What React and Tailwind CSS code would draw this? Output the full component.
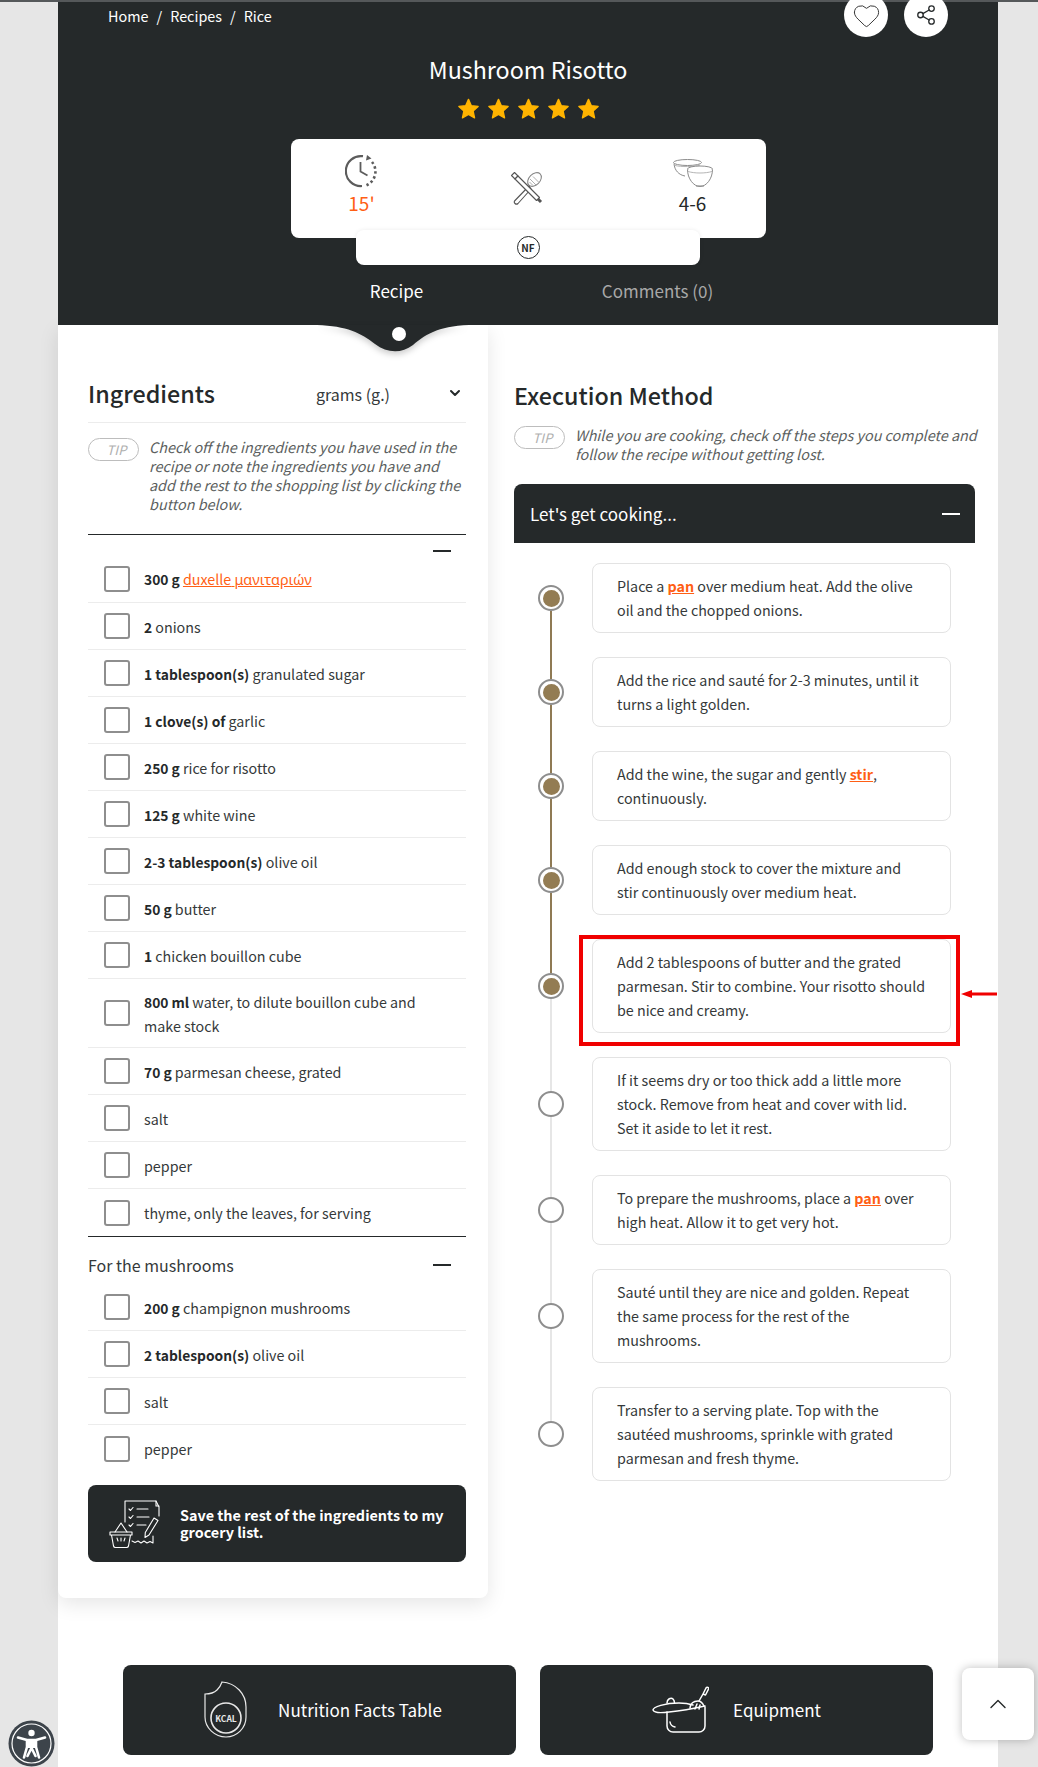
import React from 'react';
import { Heart, Share2, ChevronDown, ChevronUp } from 'lucide-react';

const ingredients = [
  { amount: '300 g', word: 'duxelle', greek: 'μανιταριών' },
  { amount: '2', text: 'onions' },
  { amount: '1 tablespoon(s)', text: 'granulated sugar' },
  { amount: '1 clove(s) of', text: 'garlic' },
  { amount: '250 g', text: 'rice for risotto' },
  { amount: '125 g', text: 'white wine' },
  { amount: '2-3 tablespoon(s)', text: 'olive oil' },
  { amount: '50 g', text: 'butter' },
  { amount: '1', text: 'chicken bouillon cube' },
  { amount: '800 ml', text: 'water, to dilute bouillon cube and make stock', tall: true },
  { amount: '70 g', text: 'parmesan cheese, grated' },
  { text: 'salt' },
  { text: 'pepper' },
  { text: 'thyme, only the leaves, for serving', last: true },
];

const mushrooms = [
  { amount: '200 g', text: 'champignon mushrooms' },
  { amount: '2 tablespoon(s)', text: 'olive oil' },
  { text: 'salt' },
  { text: 'pepper', last: true },
];

const Pan = () => <a className="font-bold text-[#ff5f15] underline">pan</a>;

const steps = [
  { body: <>Place a <Pan /> over medium heat. Add the olive oil and the chopped onions.</>, done: true },
  { body: 'Add the rice and sauté for 2-3 minutes, until it turns a light golden.', done: true },
  { body: <>Add the wine, the sugar and gently <a className="font-bold text-[#ff5f15] underline">stir</a>, continuously.</>, done: true },
  { body: <>Add enough stock to cover the mixture and<br />stir continuously over medium heat.</>, done: true },
  { body: 'Add 2 tablespoons of butter and the grated parmesan. Stir to combine. Your risotto should be nice and creamy.', done: true, marked: true },
  { body: 'If it seems dry or too thick add a little more stock. Remove from heat and cover with lid. Set it aside to let it rest.' },
  { body: <>To prepare the mushrooms, place a <Pan /> over high heat. Allow it to get very hot.</> },
  { body: 'Sauté until they are nice and golden. Repeat the same process for the rest of the mushrooms.' },
  { body: 'Transfer to a serving plate. Top with the sautéed mushrooms, sprinkle with grated parmesan and fresh thyme.' },
];

const StarIcon = () => (
  <svg width="23" height="22" viewBox="0 0 24 24" fill="#ffb400">
    <path d="M12 1.500l3.100 6.900 7.400.8-5.500 5 1.600 7.400L12 18l-6.600 3.600L7 14.200l-5.500-5 7.400-.8z" stroke="#ffb400" strokeWidth="1.500" strokeLinejoin="round" />
  </svg>
);

const ClockIcon = () => (
  <svg width="34" height="34" viewBox="0 0 34 34" fill="none" stroke="#5c5c5c" strokeWidth="2.200">
    <path d="M18 2.200A15 15 0 1 0 17 32" />
    <path d="M22 1l4.500 3.600L21 6.500z" fill="#5c5c5c" stroke="none" />
    <path d="M27 8a15 15 0 0 1-6 23.500" strokeWidth="2.600" strokeDasharray="2.400 2.600" />
    <path d="M15.500 8v9.500l7 4" strokeWidth="1.800" />
  </svg>
);

const ToolsIcon = () => (
  <svg width="34" height="34" viewBox="0 0 34 34" fill="none" stroke="#555" strokeWidth="1.100" strokeLinejoin="round">
    <ellipse cx="24.500" cy="8.500" rx="5.500" ry="8" transform="rotate(45 24.500 8.500)" stroke="#888" />
    <path d="M20 8l6 6M23 5.500l5.500 5.500M19.500 11l3.500 3.500" stroke="#999" strokeWidth="0.800" />
    <path d="M19 15L5 29.500a2 2 0 0 0 3 3L21 18z" fill="#fff" />
    <path d="M1.500 4.500l3-3 3.500 3.500-3 3z" fill="#fff" />
    <path d="M5 8l3-3 21.500 21.500-3 3z" fill="#fff" />
    <path d="M28 28l3 3" strokeWidth="3" />
  </svg>
);

const BowlsIcon = () => (
  <svg width="40" height="30" viewBox="0 0 40 30" fill="none" stroke="#8c8c8c" strokeWidth="1">
    <ellipse cx="14.500" cy="4.500" rx="14" ry="3" />
    <path d="M1 5.500c.5 7 5 11.500 11 12.500" />
    <path d="M2 7.500c6 1.500 19 1.500 25-.500" stroke="#b5b5b5" />
    <ellipse cx="27" cy="11" rx="12.500" ry="3" fill="#fff" />
    <path d="M14.500 11.500c0 9 6 17 12.500 17s12.500-8 12.500-17" fill="#fff" />
    <path d="M15 13.500c7 2 17 2 24 0" stroke="#b5b5b5" />
    <path d="M23 28h8" />
  </svg>
);

const NotchIcon = () => (
  <svg width="160" height="30" viewBox="0 0 160 30" className="drop-shadow-[0_3px_3px_rgba(0,0,0,0.2)]">
    <path d="M0 0C30 1 44 8 58 19 70 28 84 29 96 20 110 8 124 0 158 0z" fill="#25292a" />
  </svg>
);

const GroceryIcon = () => (
  <svg width="52" height="50" viewBox="0 0 52 50" fill="none" stroke="#fff" strokeWidth="1.100" strokeLinejoin="round" strokeLinecap="round" className="shrink-0">
    <path d="M17 23V2h31l3 6v9" />
    <path d="M48 2v5h3" />
    <path d="M21 10l1.500 1.500 2.500-3M21 18l1.500 1.500 2.500-3M21 26l1.500 1.500 2.500-3" />
    <path d="M29 10h11M29 18h12M29 26h9" />
    <path d="M46 19l4 2.500-9 14.500-4 2.500.300-5z" />
    <path d="M45 37v7l-3-1.500-3 1.500-3-2-3 2-3-2-3 1.500-3-1.500" />
    <path d="M2 33h22v3H2zM3.500 36l2 11a2 2 0 0 0 2 1.500h11a2 2 0 0 0 2-1.500l2-11" />
    <path d="M7 33l6-9 6 9M9 39l1 3M13 39v3M17 39l-1 3" />
  </svg>
);

const KcalIcon = () => (
  <svg width="44" height="58" viewBox="0 0 44 58" fill="none" stroke="#e8e8e8" strokeWidth="1.200" className="shrink-0">
    <path d="M18 1c14 1 24 12 24 25v10c0 11-9 20-20 20S1 47 1 36V13c5 0 9-1 12-4 2-2 4-5 5-8z" />
    <circle cx="22" cy="37" r="15" strokeWidth="1.600" />
    <text x="22" y="40.500" textAnchor="middle" fill="#e8e8e8" stroke="none" fontSize="8.500" fontWeight="700">KCAL</text>
  </svg>
);

const PotIcon = () => (
  <svg width="57" height="48" viewBox="0 0 57 48" fill="none" stroke="#fff" strokeWidth="1.500" strokeLinecap="round" strokeLinejoin="round" className="shrink-0">
    <path d="M15 26v14a6 6 0 0 0 6 6h26a6 6 0 0 0 6-6V21" />
    <path d="M18 36c.500 3 2 4.500 5 5" />
    <path d="M1 24c0-3 12-7 26-7 6 0 11 1 14 2M1 24c1 3 8 3 16 2 10-1 27-4 36-6" />
    <path d="M15 17c0-4 4-6 6-4 1.500 1.500 1.500 3 1.500 4" />
    <path d="M38 22c.500-4 3-7 8-7 3 0 5 3 6 5" />
    <path d="M47 15l4-7M51 8l3-6c1-1.500 3-.500 2.500 1l-3 6z" />
    <path d="M43 23l2-5M47 23l1-4" />
  </svg>
);

const AccessIcon = () => (
  <svg width="47" height="47" viewBox="0 0 47 47" fill="none">
    <circle cx="23.500" cy="23.500" r="23" fill="#3d444b" />
    <circle cx="23.500" cy="23.500" r="19.500" stroke="#fff" strokeWidth="1.200" />
    <circle cx="23.500" cy="13" r="3.200" fill="#fff" />
    <path d="M10 17.500l9 2.500v7l-3 10.500M37 17.500l-9 2.500v7l3 10.500M19 20h9M23.500 28l-4 8M23.500 28l4 8" stroke="#fff" strokeWidth="2.600" strokeLinecap="round" strokeLinejoin="round" />
    <path d="M19 20h9v8h-9z" fill="#fff" />
  </svg>
);

const TipPill = () => (
  <span className="flex h-[23px] w-[51px] shrink-0 items-center justify-center rounded-full border border-[#bdbdbd] pl-[6px] text-[13px] italic leading-none text-[#b0b0b0]">
    TIP
  </span>
);

const Minus = ({ color = 'bg-[#25292a]' }) => <span className={`block h-[2px] w-[18px] ${color}`}></span>;

const IngredientRow = ({ item }) => (
  <li className={`flex items-center pl-[16px] ${item.tall ? 'h-[69px]' : 'h-[47px]'} ${item.last ? '' : 'border-b border-[#ececec]'}`}>
    <span className="h-[26px] w-[26px] shrink-0 rounded-[3px] border-2 border-[#8e8e8e]"></span>
    <p className="ml-[14px] mt-[1px] max-w-[300px] text-[14.300px] leading-[24px] text-[#35393a]">
      {item.amount && <b className="text-[13.800px] font-semibold text-[#25292a]">{item.amount} </b>}
      {item.greek ? (
        <a className="text-[#ff5f15] underline">
          {item.word} <span className="font-['Noto_Sans'] text-[14.400px]">{item.greek}</span>
        </a>
      ) : item.text}
    </p>
  </li>
);

const Step = ({ step, index, total }) => {
  const topColor = index === 0 ? '' : index <= 4 ? 'bg-[#8f7a54]' : 'bg-[#e6e6e6]';
  const bottomColor = index === total - 1 ? '' : index < 4 ? 'bg-[#8f7a54]' : 'bg-[#e6e6e6]';
  return (
    <div className="flex">
      <div className="flex w-[26px] shrink-0 flex-col items-center">
        <span className={`w-[2px] flex-1 ${topColor}`}></span>
        <span className="flex h-[26px] w-[26px] shrink-0 items-center justify-center rounded-full border-[2.500px] border-[#8e8e8e] bg-white">
          {step.done && <span className="h-[17px] w-[17px] rounded-full bg-[#937c53]"></span>}
        </span>
        <span className={`w-[2px] flex-1 ${bottomColor}`}></span>
      </div>
      <div className="ml-[28px] w-[359px] py-[12px]">
        <div className="relative rounded-[8px] border border-[#e3e3e3] py-[10px] pl-[24px] pr-[23px] text-[14.300px] leading-[24px] text-[#35393a]">
          {step.body}
          {step.marked && (
            <>
              <span className="absolute -top-[5px] -left-[14px] -bottom-[14px] -right-[10px] border-4 border-[#f00000]"></span>
              <svg width="36" height="10" viewBox="0 0 36 10" className="absolute top-[49px] -right-[47px]">
                <path d="M0 5l11-4v2.500h25v3H11V9z" fill="#f00000" />
              </svg>
            </>
          )}
        </div>
      </div>
    </div>
  );
};

const App = () => {
  return (
    <div className="relative h-[1767px] w-[1038px] overflow-hidden bg-[#e6e6e6] font-['Noto_Sans_CJK_SC','Noto_Sans',sans-serif]">
      <div className="h-[2px] bg-[#55585a]"></div>
      <main className="ml-[58px] h-[1765px] w-[940px] bg-white">
        <header className="relative flex h-[323px] flex-col items-center bg-[#25292a] text-white">
          <div className="flex w-full items-start justify-between pl-[50px] pr-[50px]">
            <nav className="mt-[3px] flex gap-[8px] text-[14.400px] leading-[22px]">
              <span>Home</span><span>/</span><span>Recipes</span><span>/</span><span>Rice</span>
            </nav>
            <div className="-mt-[9px] flex gap-[16px]">
              <span className="flex h-[44px] w-[44px] items-center justify-center rounded-full bg-white">
                <Heart size={29} strokeWidth={0.8} color="#333" />
              </span>
              <span className="flex h-[44px] w-[44px] items-center justify-center rounded-full bg-white">
                <Share2 size={22} strokeWidth={1.4} color="#25292a" />
              </span>
            </div>
          </div>
          <h1 className="mt-[15px] text-[23.300px] leading-[34px]">Mushroom Risotto</h1>
          <div className="mt-[12px] flex gap-[7px]">
            {[0, 1, 2, 3, 4].map((i) => <StarIcon key={i} />)}
          </div>
          <div className="mt-[19px] flex h-[99px] w-[475px] items-start justify-between rounded-[8px] bg-white pl-[54px] pr-[53px] pt-[15px] text-[19px] leading-[26px] text-[#25292a]">
            <div className="flex w-[34px] flex-col items-center">
              <ClockIcon />
              <span className="mt-[2px] text-[#ff5f15]">15'</span>
            </div>
            <div className="ml-[3px] mt-[17px]"><ToolsIcon /></div>
            <div className="flex w-[40px] flex-col items-center">
              <span className="mt-[4px] block h-[30px]"><BowlsIcon /></span>
              <span className="mt-[2px]">4-6</span>
            </div>
          </div>
          <div className="relative -mt-[8px] flex h-[35px] w-[344px] items-center justify-center rounded-[8px] bg-white shadow-[0_0_4px_rgba(0,0,0,0.08)]">
            <span className="flex h-[23px] w-[23px] items-center justify-center rounded-full border border-[#25292a] text-[10px] font-bold leading-none text-[#25292a]">NF</span>
          </div>
          <div className="ml-[28px] mt-[12px] flex w-[391px] justify-between text-[17px] leading-[28px]">
            <span className="w-[100px] text-center">Recipe</span>
            <span className="w-[160px] text-center text-[#a8a8a8]">Comments (0)</span>
          </div>
          <div className="absolute left-[259px] top-[323px] z-10 h-[30px] w-[160px]">
            <NotchIcon />
            <span className="absolute left-[75px] top-[2px] h-[14px] w-[14px] rounded-full bg-white"></span>
          </div>
        </header>

        <div className="flex items-start">
          <section className="h-[1273px] w-[430px] rounded-b-[8px] bg-white pl-[30px] pr-[22px] shadow-[0_6px_20px_rgba(0,0,0,0.1)]">
            <div className="flex h-[98px] items-end border-b border-[#ececec] pb-[11px]">
              <h2 className="w-[228px] text-[23.300px] font-medium leading-[36px] text-[#25292a]">Ingredients</h2>
              <span className="flex-1 pb-[4px] text-[16px] leading-[26px] text-[#35393a]">grams (g.)</span>
              <ChevronDown size={16} strokeWidth={3} color="#25292a" className="mb-[10px] mr-[3px]" />
            </div>
            <div className="flex h-[112px] gap-[10px] border-b border-[#25292a] pt-[15px]">
              <TipPill />
              <p className="-mt-[1px] text-[14.400px] italic leading-[19px] text-[#5c5f60]">
                Check off the ingredients you have used in the recipe or note the ingredients you have and add the rest to the shopping list by clicking the button below.
              </p>
            </div>
            <div className="flex h-[21px] items-end justify-end pb-[4px] pr-[15px]"><Minus /></div>
            <ul>
              {ingredients.map((item) => <IngredientRow key={item.text || item.word} item={item} />)}
            </ul>
            <div className="flex h-[48px] items-center justify-between border-t border-[#25292a] pr-[15px] pt-[8px] text-[16px] text-[#35393a]">
              <span>For the mushrooms</span>
              <Minus />
            </div>
            <ul>
              {mushrooms.map((item) => <IngredientRow key={item.text} item={item} />)}
            </ul>
            <button className="mt-[13px] flex h-[77px] w-[378px] items-center rounded-[8px] bg-[#25292a] pl-[20px] pr-[20px] text-left text-white">
              <GroceryIcon />
              <span className="ml-[20px] text-[14.400px] font-bold leading-[16.500px]">Save the rest of the ingredients to my grocery list.</span>
            </button>
          </section>

          <section className="ml-[26px] w-[461px]">
            <h2 className="mt-[52px] text-[23.300px] font-medium leading-[36px] text-[#25292a]">Execution Method</h2>
            <div className="mt-[13px] flex gap-[10px]">
              <TipPill />
              <p className="-mr-[8px] -mt-[1px] text-[14.400px] italic leading-[19px] text-[#5c5f60]">
                While you are cooking, check off the steps you complete and follow the recipe without getting lost.
              </p>
            </div>
            <div className="mt-[21px] flex h-[59px] items-center justify-between rounded-t-[8px] bg-[#25292a] pl-[16px] pr-[15px] text-[17px] text-white">
              <span>Let's get cooking...</span>
              <Minus color="bg-white" />
            </div>
            <div className="ml-[24px] mt-[8px]">
              {steps.map((step, index) => <Step key={index} step={step} index={index} total={steps.length} />)}
            </div>
          </section>
        </div>

        <div className="mt-[67px] flex justify-center gap-[24px]">
          <button className="flex h-[90px] w-[393px] items-center justify-center rounded-[8px] bg-[#25292a] pl-[7px] text-[17px] text-white">
            <KcalIcon />
            <span className="ml-[30px]">Nutrition Facts Table</span>
          </button>
          <button className="flex h-[90px] w-[393px] items-center justify-center rounded-[8px] bg-[#25292a] text-[17px] text-white">
            <PotIcon />
            <span className="ml-[24px]">Equipment</span>
          </button>
        </div>
      </main>

      <span className="absolute left-[8px] top-[1720px]"><AccessIcon /></span>
      <button className="absolute left-[962px] top-[1668px] flex h-[72px] w-[72px] items-center justify-center rounded-[8px] bg-white shadow-[0_0_10px_rgba(0,0,0,0.25)]">
        <ChevronUp size={28} strokeWidth={1.2} color="#25292a" />
      </button>
    </div>
  );
};

export default App;
